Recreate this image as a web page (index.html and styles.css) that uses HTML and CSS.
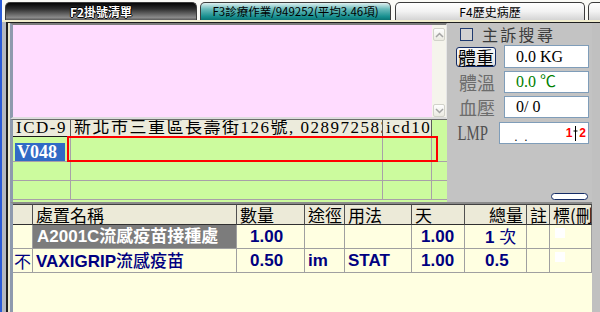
FILE: index.html
```html
<!DOCTYPE html>
<html lang="zh-Hant">
<head>
  <meta charset="UTF-8">
  <title>診療作業</title>
  <link rel="stylesheet" href="styles.css">
</head>
<body>

<div class="window">
  <div class="tabs">
    <div class="tab tab-dark">F2掛號清單</div>
    <div class="tab tab-teal">F3診療作業/949252(平均3.46項)</div>
    <div class="tab tab-light">F4歷史病歷</div>
    <div class="tab tab-light tab-more"></div>
  </div>

  <div class="frame">
    <div class="upper">
      <div class="left">
        <div class="memo">
          <div class="memo-text"></div>
          <div class="vscroll">
            <div class="vscroll-btn"><svg width="9" height="6" viewBox="0 0 9 6"><polyline points="1,5 4.5,1.5 8,5"/></svg></div>
            <div class="vscroll-btn"><svg width="9" height="6" viewBox="0 0 9 6"><polyline points="1,1 4.5,4.5 8,1"/></svg></div>
          </div>
        </div>

        <div class="diag">
          <table class="diag-table">
            <colgroup>
              <col class="c-icd9">
              <col class="c-addr">
              <col class="c-icd10">
              <col class="c-end">
            </colgroup>
            <thead>
              <tr>
                <th>ICD-9</th>
                <th>新北市三重區長壽街126號, 028972583</th>
                <th>icd10</th>
                <th class="blank"></th>
              </tr>
            </thead>
            <tbody>
              <tr class="first"><td><span class="sel">V048</span></td><td></td><td></td><td></td></tr>
              <tr><td></td><td></td><td></td><td></td></tr>
              <tr><td></td><td></td><td></td><td></td></tr>
            </tbody>
          </table>
          <div class="diag-focus"></div>
        </div>
      </div>

      <div class="side">
        <div class="check-row">
          <span class="check"></span>
          <span class="check-text">主訴搜尋</span>
        </div>
        <div class="field-row row-weight">
          <button class="btn-weight">體重</button>
          <div class="field">0.0 KG</div>
        </div>
        <div class="field-row">
          <span class="field-label">體溫</span>
          <div class="field field-green">0.0 ℃</div>
        </div>
        <div class="field-row">
          <span class="field-label">血壓</span>
          <div class="field">0/ 0</div>
        </div>
        <div class="field-row row-lmp">
          <span class="field-label lmp">LMP</span>
          <div class="field field-lmp">
            <span class="lmp-dots">.&nbsp;&nbsp;.</span>
            <span class="lmp-mark">1<svg class="caret" width="5" height="15" viewBox="0 0 5 15"><path d="M2.5 0v15M0.5 5h4"/></svg>2</span>
          </div>
        </div>
        <div class="side-btn"></div>
      </div>
    </div>

    <div class="orders">
      <table class="orders-table">
        <colgroup>
          <col class="o-flag">
          <col class="o-name">
          <col class="o-qty">
          <col class="o-route">
          <col class="o-usage">
          <col class="o-days">
          <col class="o-total">
          <col class="o-note">
          <col class="o-mark">
        </colgroup>
        <thead>
          <tr>
            <th></th>
            <th>處置名稱</th>
            <th>數量</th>
            <th>途徑</th>
            <th>用法</th>
            <th>天</th>
            <th class="right">總量</th>
            <th>註</th>
            <th>標(刪</th>
          </tr>
        </thead>
        <tbody>
          <tr class="r1">
            <td></td>
            <td class="name-sel">A2001C流感疫苗接種處</td>
            <td class="num">1.00</td>
            <td></td>
            <td></td>
            <td class="day">1.00</td>
            <td class="total">1 <span class="thin">次</span></td>
            <td></td>
            <td><span class="box"></span></td>
          </tr>
          <tr class="r2">
            <td class="thin flag">不</td>
            <td>VAXIGRIP<span class="mid">流感疫苗</span></td>
            <td class="num">0.50</td>
            <td>im</td>
            <td>STAT</td>
            <td class="day">1.00</td>
            <td class="total">0.5</td>
            <td></td>
            <td><span class="box"></span></td>
          </tr>
        </tbody>
      </table>
    </div>
  </div>
</div>

</body>
</html>
```

FILE: styles.css
```css
* {
  box-sizing: border-box;
}

html, body {
  margin: 0;
  padding: 0;
}

body {
  width: 600px;
  height: 312px;
  overflow: hidden;
  font-family: "Noto Sans CJK TC", sans-serif;
  color: #000;
}

.window {
  width: 600px;
  height: 312px;
  display: flex;
  flex-direction: column;
  border-left: 2px solid #2a5bd7;
  background: #b4b8c0;
}

/* tab strip */
.tabs {
  flex: none;
  height: 22px;
  display: flex;
  align-items: flex-end;
  padding-left: 3px;
  background: #fafaf6;
  border-bottom: 2px solid #f1edcd;
  overflow: hidden;
}

.tab {
  flex: none;
  height: 18px;
  margin-right: 3px;
  border: 1px solid #3c3c3c;
  border-bottom: none;
  border-radius: 5px 5px 0 0;
  font-size: 12px;
  line-height: 17px;
  text-align: center;
  white-space: nowrap;
  overflow: hidden;
}

.tab-dark {
  width: 192px;
  color: #fff;
  font-weight: 700;
  background: linear-gradient(#050505, #2e2e2e 35%, #8a8a8a 85%, #5a5a5a);
  text-shadow: 1px 0 #000, -1px 0 #000, 0 1px #000, 0 -1px #000;
}

.tab-teal {
  width: 191px;
  margin-right: 4px;
  font-size: 11.5px;
  background: linear-gradient(#e0f0f0, #6cbcbc 35%, #178f8f 80%, #0a7474);
}

.tab-light {
  width: 190px;
  background: linear-gradient(#ffffff, #f2f2f2 50%, #d4d4d4);
}

.tab-more {
  width: 20px;
  margin-right: 0;
}

/* main frame */
.frame {
  flex: 1;
  min-height: 0;
  display: flex;
  flex-direction: column;
  margin-left: 4px;
  border-top: 1px solid #1e1e1e;
  border-left: 2px solid #1e1e1e;
  padding: 0 8px 0 2px;
  background: #c0c0c0;
  box-shadow: inset 2px 0 #ece9cf;
}

.upper {
  flex: none;
  height: 179px;
  display: flex;
}

.left {
  width: 437px;
  display: flex;
  flex-direction: column;
}

.memo {
  height: 96px;
  display: flex;
  border-top: 2px solid #7c7c7c;
  border-left: 3px solid #8e9aae;
  border-right: 1px solid #e6e6e6;
  border-bottom: 2px solid #dcdcdc;
}

.memo-text {
  flex: 1;
  background: #ffdcff;
}

.vscroll {
  width: 14px;
  display: flex;
  flex-direction: column;
  justify-content: space-between;
  padding: 3px 1px 0;
  background: #f5f4ec;
}

.vscroll-btn {
  height: 13px;
  display: flex;
  align-items: center;
  justify-content: center;
  border: 1px solid #d2d2ca;
  border-radius: 2px;
  background: linear-gradient(#fefefe, #ebeae2);
}

.vscroll-btn polyline {
  fill: none;
  stroke: #a4a4a4;
  stroke-width: 1.5;
}

/* diagnosis grid */
.diag {
  position: relative;
  flex: 1;
  border-top: 1px solid #6c6c6c;
  border-left: 3px solid #8e9aae;
  background: #ccfb9e;
  overflow: hidden;
}

.diag-table {
  width: 434px;
  table-layout: fixed;
  border-collapse: separate;
  border-spacing: 0;
}

.c-icd9 { width: 58px; }
.c-addr { width: 312px; }
.c-icd10 { width: 49px; }
.c-end { width: 15px; }

.diag-table th {
  height: 17px;
  padding: 0 0 0 3px;
  background: #ecebdc;
  border-right: 1px solid #5a5a5a;
  border-bottom: 1px solid #1a1a1a;
  font: 400 17px/16px "Liberation Serif", "Noto Sans CJK TC", serif;
  letter-spacing: 1.5px;
  text-align: left;
  white-space: nowrap;
  overflow-x: clip;
  overflow-y: visible;
}

.diag-table th.blank {
  background: transparent;
  border: none;
}

.diag-table td {
  height: 19px;
  padding: 0 0 0 2px;
  border-right: 1px solid #a8a0a8;
  border-bottom: 1px solid #a8a0a8;
}

.diag-table tr.first td {
  height: 20px;
}

.diag-table td:last-child {
  border-right: none;
}

.sel {
  display: inline-block;
  width: 50px;
  height: 18px;
  padding-left: 2px;
  background: #316ac5;
  color: #fff;
  font: 700 18px/18px "Liberation Serif", serif;
  vertical-align: middle;
}

.diag-focus {
  position: absolute;
  left: 54px;
  top: 16px;
  width: 371px;
  height: 26px;
  border: 2px solid #f00;
}

/* side panel */
.side {
  width: 145px;
  display: flex;
  flex-direction: column;
  padding: 3px 3px 2px 9px;
  background: #c3c3c3;
}

.check-row {
  height: 17px;
  display: flex;
  align-items: flex-start;
  padding-left: 4px;
}

.check {
  width: 13px;
  height: 13px;
  margin-top: 2px;
  border: 1px solid #1f3a70;
  background: #d2d2d2;
}

.check-text {
  margin-left: 9px;
  font-size: 16px;
  line-height: 17px;
  letter-spacing: 2.3px;
  color: #3c3c3c;
}

.field-row {
  height: 22px;
  margin-top: 3px;
  display: flex;
  justify-content: space-between;
  align-items: center;
}

.row-weight {
  height: 23px;
  margin-top: 2px;
}

.row-lmp {
  margin-top: 4px;
}

.btn-weight {
  width: 40px;
  height: 20px;
  padding: 0;
  border: 1px solid #142c66;
  border-radius: 3px;
  background: linear-gradient(#fbfbfb, #e2e2e2);
  font-family: "Noto Sans CJK TC", sans-serif;
  font-size: 18px;
  line-height: 18px;
  color: #000;
}

.field-label {
  padding-left: 3px;
  font-size: 18px;
  line-height: 20px;
  color: #6c6c6c;
}

.field-label.lmp {
  display: inline-block;
  padding-left: 2px;
  font: 400 20px/20px "Liberation Serif", serif;
  color: #505050;
  transform: scaleX(0.74);
  transform-origin: left center;
}

.field {
  width: 85px;
  height: 100%;
  padding-left: 11px;
  background: #fff;
  border: 1px solid #7f9db9;
  font: 400 16px/20px "Liberation Serif", "Noto Sans CJK TC", serif;
  color: #000;
}

.row-weight .field {
  line-height: 21px;
}

.field-green {
  color: #008000;
}

.field-lmp {
  width: 95px;
  display: flex;
  align-items: center;
  padding: 0 2px 0 14px;
}

.lmp-dots {
  font: 400 12px/12px "Liberation Sans", sans-serif;
  margin-top: 8px;
}

.lmp-mark {
  margin-left: auto;
  display: flex;
  align-items: center;
  font: 700 12px/12px "Liberation Sans", sans-serif;
  color: #f00;
}

.caret {
  margin: 0 1px;
}

.caret path {
  stroke: #000;
  stroke-width: 1;
  fill: none;
}

.side-btn {
  width: 37px;
  height: 7px;
  margin-top: auto;
  align-self: flex-end;
  margin-right: 1px;
  border: 1px solid #142c66;
  border-radius: 4px;
  background: #fff;
}

/* orders grid */
.orders {
  flex: 1;
  min-height: 0;
  border-top: 2px solid #8a8a8a;
  border-left: 3px solid #8e9aae;
  background: #ffffe1;
  overflow: hidden;
}

.orders-table {
  width: 579px;
  table-layout: fixed;
  border-collapse: separate;
  border-spacing: 0;
}

.o-flag { width: 20px; }
.o-name { width: 204px; }
.o-qty { width: 68px; }
.o-route { width: 40px; }
.o-usage { width: 67px; }
.o-days { width: 53px; }
.o-total { width: 62px; }
.o-note { width: 23px; }
.o-mark { width: 42px; }

.orders-table th {
  height: 21px;
  padding: 0 0 0 3px;
  background: #ecead8;
  border-top: 1px solid #404040;
  border-right: 1px solid #505050;
  border-bottom: 1px solid #303030;
  font: 400 17px/19px "Noto Sans CJK TC", sans-serif;
  text-align: left;
  white-space: nowrap;
  overflow: hidden;
}

.orders-table th.right {
  text-align: right;
  padding: 0 3px 0 0;
}

.orders-table td {
  height: 22px;
  padding: 0 0 0 3px;
  border-right: 1px solid #a0a0a0;
  border-bottom: 1px solid #a0a0a0;
  color: #000080;
  font: 700 17px/21px "Liberation Sans", "Noto Sans CJK TC", sans-serif;
  white-space: nowrap;
  overflow: hidden;
}

.orders-table tr.r2 td {
  height: 21px;
}

.orders-table td.name-sel {
  padding-left: 4px;
  background: #7c7c7c;
  color: #fff;
}

.orders-table td.num { padding-left: 13px; }
.orders-table td.day { padding-left: 9px; }
.orders-table td.total { padding-left: 20px; }
.orders-table td.flag { padding-left: 1px; }

.orders-table .thin {
  font-family: "Noto Sans CJK TC", sans-serif;
  font-weight: 400;
}

.orders-table .mid {
  font-family: "Noto Sans CJK TC", sans-serif;
  font-weight: 500;
}

.box {
  display: inline-block;
  width: 10px;
  height: 10px;
  margin: 0 0 0 2px;
  background: #fff;
  vertical-align: 4px;
}
```
